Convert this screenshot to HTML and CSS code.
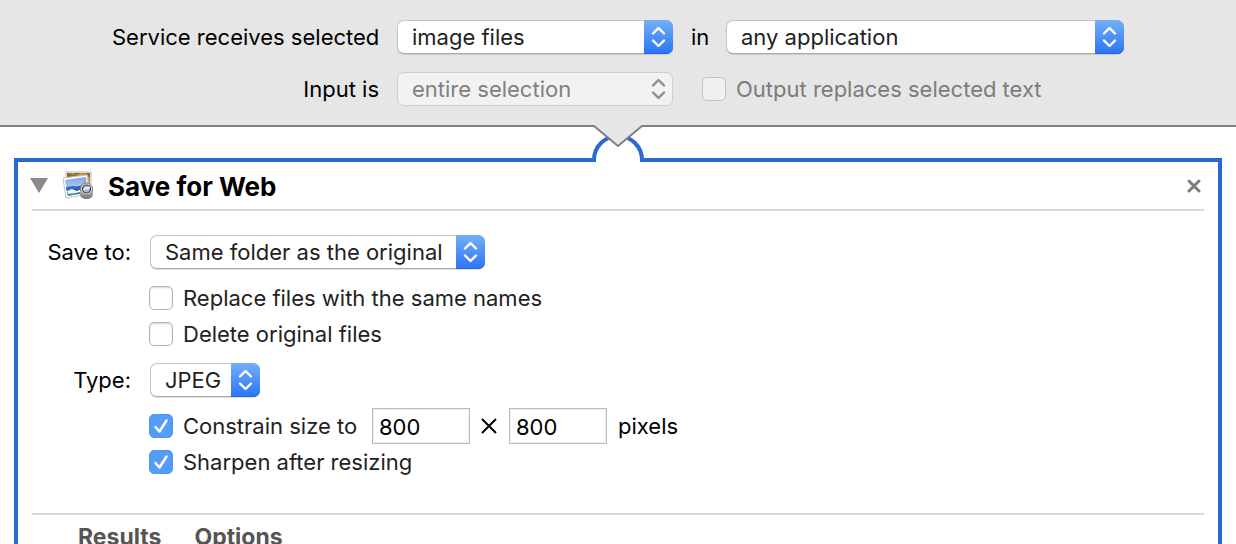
FILE: index.html
```html
<!DOCTYPE html>
<html lang="en">
<head>
<meta charset="utf-8">
<title>Save for Web</title>
<link rel="stylesheet" href="styles.css">
</head>
<body>
<svg class="defs" width="0" height="0" aria-hidden="true">
  <symbol id="chevrons" viewBox="0 0 29 34">
    <path d="M9 13.500 14.500 8 20 13.500M9 20.500 14.500 26 20 20.500" fill="none" stroke="currentColor" stroke-width="2.400" stroke-linecap="round" stroke-linejoin="round"/>
  </symbol>
</svg>
<header class="service">
  <label class="service-label" for="receives">Service receives selected</label>
  <span class="popup">
    <select id="receives"><option>image files</option></select>
    <svg class="popup-arrows"><use href="#chevrons"/></svg>
  </span>
  <label class="service-in" for="app">in</label>
  <span class="popup">
    <select id="app"><option>any application</option></select>
    <svg class="popup-arrows"><use href="#chevrons"/></svg>
  </span>
  <label class="service-label" for="input">Input is</label>
  <span class="popup popup-off">
    <select id="input" disabled><option>entire selection</option></select>
    <svg class="popup-arrows"><use href="#chevrons"/></svg>
  </span>
  <label class="check service-output"><input type="checkbox" disabled>Output replaces selected text</label>
  <svg class="notch" viewBox="0 0 60 40" aria-hidden="true">
    <rect x="8" y="33" width="44" height="7" fill="#fff"/>
    <path d="M6 37V35A24 24 0 0 1 54 35V37" fill="#fff" stroke="#2869d2" stroke-width="4"/>
    <path d="M5 0H55L54 1 30 21 6 1Z" fill="#e6e6e6"/>
    <path d="M5 1H6L30 21 54 1H55" fill="none" stroke="#808080" stroke-width="2"/>
  </svg>
</header>
<main class="workflow">
  <section class="action">
    <div class="action-head">
      <button class="disclose" aria-label="Collapse"><svg width="18" height="15" viewBox="0 0 18 15"><path d="M0 0H18L9 15Z" fill="#8b8b8b"/></svg></button>
      <svg class="app-icon" width="34" height="32" viewBox="0 0 34 32" aria-hidden="true">
        <defs>
          <linearGradient id="sky" x1="0" y1="0" x2="0" y2="1"><stop offset="0" stop-color="#7ba4e8"/><stop offset="1" stop-color="#d4e6fb"/></linearGradient>
          <linearGradient id="metal" x1="0" y1="0" x2="0" y2="1"><stop offset="0" stop-color="#d0cdc6"/><stop offset="1" stop-color="#6f6c65"/></linearGradient>
        </defs>
        <path d="M4 2H29V24H4Z" fill="#fff" stroke="#b7b7b7" stroke-width="1"/>
        <path d="M5 3H28V22H5Z" fill="#8a6534"/>
        <path d="M7 4 11 3 14 5 19 3 25 4 28 8 28 17 25 10 17 6Z" fill="#c1974e"/>
        <path d="M1 8 25 5 28 24 4 28Z" fill="#fff" stroke="#c4c4c4" stroke-width="1"/>
        <path d="M3 10 24 7 26 22 6 26Z" fill="url(#sky)"/>
        <path d="M4 18 25 15 26 22 6 26Z" fill="#214e9b"/>
        <path d="M4 17 11 16 16 17 25 15 25 18 17 19 5 20Z" fill="#356db4"/>
        <path d="M5 21 10 19 15 21 19 19 19 22 14 23 6 24Z" fill="#edf7ff"/>
        <path d="M6 25 12 23 17 24 6 26Z" fill="#6aa3aa"/>
        <path d="M18 20H31V25A6.500 4 0 0 1 18 25Z" fill="url(#metal)"/>
        <circle cx="24.500" cy="19" r="6" fill="#f1eee8" stroke="#77736b"/>
        <circle cx="24.500" cy="19" r="4" fill="#a9bdd3" stroke="#34383e" stroke-width="1.200"/>
        <path d="M21.500 20 24 18 26 18.500 27.500 17" fill="none" stroke="#fff" stroke-width="1.500"/>
      </svg>
      <h1>Save for Web</h1>
      <button class="close" aria-label="Remove action"><svg width="14" height="14" viewBox="0 0 14 14"><path d="M2 2 12 12M12 2 2 12" fill="none" stroke="#7d7d7d" stroke-width="3" stroke-linecap="round"/></svg></button>
    </div>
    <form class="options">
      <label class="option-label" for="folder">Save to:</label>
      <span class="popup popup-folder">
        <select id="folder"><option>Same folder as the original</option></select>
        <svg class="popup-arrows"><use href="#chevrons"/></svg>
      </span>
      <div class="checks">
        <label class="check"><input type="checkbox">Replace files with the same names</label>
        <label class="check"><input type="checkbox">Delete original files</label>
      </div>
      <label class="option-label" for="type">Type:</label>
      <span class="popup popup-type">
        <select id="type"><option>JPEG</option></select>
        <svg class="popup-arrows"><use href="#chevrons"/></svg>
      </span>
      <div class="checks">
        <div class="size">
          <label class="check size-check"><input type="checkbox" checked>Constrain size to</label>
          <input class="size-field" type="text" value="800" aria-label="Width">
          <svg class="times" width="18" height="18" viewBox="0 0 18 18" role="img" aria-label="by"><path d="M2 2 16 16M16 2 2 16" stroke="#000" stroke-width="2"/></svg>
          <input class="size-field" type="text" value="800" aria-label="Height">
          <span class="unit">pixels</span>
        </div>
        <label class="check"><input type="checkbox" checked>Sharpen after resizing</label>
      </div>
    </form>
    <footer class="tabs">
      <button>Results</button>
      <button>Options</button>
    </footer>
  </section>
</main>
</body>
</html>
```
FILE: styles.css
```css
* { box-sizing: border-box; }

body {
  margin: 0;
  height: 100vh;
  overflow: hidden;
  background: #fff;
  color: #000;
  font: 22px/28px Inter, "Liberation Sans", sans-serif;
}

button, input, select { font: inherit; color: inherit; margin: 0; }
button { padding: 0; border: 0; background: none; }
svg { display: block; flex: none; }
.defs { position: absolute; }

.service {
  position: relative;
  display: grid;
  grid-template-columns: 267px 276px 17px 398px;
  gap: 18px;
  align-items: center;
  justify-content: center;
  padding: 20px 0 19px;
  background: #e6e6e6;
  border-bottom: 2px solid #808080;
}
.service-label { text-align: right; white-space: nowrap; }
.service-output { grid-column: 3 / -1; padding-left: 11px; }

.notch {
  position: absolute;
  left: 50%;
  top: 100%;
  width: 60px;
  height: 40px;
  margin-left: -30px;
}

.popup { position: relative; display: block; height: 34px; }
.popup select {
  appearance: none;
  display: block;
  width: 100%;
  height: 34px;
  padding: 0 30px 0 14px;
  border: 1px solid #c6c6c6;
  border-bottom-color: #aaa;
  border-radius: 7px;
  background: #fff;
  color: #222;
  box-shadow: 0 1px 1px rgba(0, 0, 0, .12);
  line-height: 28px;
}
.popup-arrows {
  position: absolute;
  top: 0;
  right: 0;
  width: 29px;
  height: 34px;
  border-radius: 0 7px 7px 0;
  background: linear-gradient(#74aff6, #2a74f7);
  box-shadow: inset 0 -1px #1c62ee;
  color: #fff;
  pointer-events: none;
}
.popup-off select { background: #f2f2f2; color: #808080; opacity: 1; border-color: #cfcfcf; box-shadow: none; }
.popup-off .popup-arrows { background: none; box-shadow: none; color: #8c8c8c; }
.popup-folder { width: 335px; }
.popup-type { width: 110px; }

.check { display: flex; align-items: center; gap: 10px; height: 36px; color: #222; white-space: nowrap; }
.service-output { height: 34px; color: #7c7c7c; }
.check input {
  appearance: none;
  flex: none;
  width: 24px;
  height: 24px;
  border: 1px solid #b4b4b4;
  border-radius: 5px;
  background: #fff;
  box-shadow: inset 0 1px 2px rgba(0, 0, 0, .16);
}
.check input:disabled { background: #f0f0f0; border-color: #c4c4c4; box-shadow: none; }
.check input:checked {
  border-color: #5096f5;
  box-shadow: none;
  background: #559bf8 url("data:image/svg+xml,%3Csvg xmlns='http://www.w3.org/2000/svg' viewBox='0 0 22 22'%3E%3Cpath d='M5.500 12 9.500 16.500 16.500 5.500' fill='none' stroke='white' stroke-width='2.500' stroke-linecap='round' stroke-linejoin='round'/%3E%3C/svg%3E") center / 22px no-repeat;
}

.workflow { padding: 31px 14px 0; }
.action { border: 4px solid #2869d2; padding: 0 14px 20px; }
.action-head {
  display: flex;
  align-items: center;
  height: 49px;
  border-bottom: 2px solid #d8d8d8;
}
.disclose { margin: 0 14px 0 -2px; }
.app-icon { margin-right: 12px; }
h1 { flex: 1; margin: 0; padding-top: 2px; font-size: 26px; line-height: 32px; font-weight: 700; }
.close { padding: 0 3px; }

.options {
  display: grid;
  grid-template-columns: 99px 1fr;
  column-gap: 19px;
  align-items: center;
  padding: 24px 0 22px;
}
.option-label { text-align: right; }
.checks { grid-column: 2; margin-left: -1px; padding: 11px 0; }
.size { display: flex; align-items: center; height: 36px; }
.size-check { width: 223px; }
.size-field { width: 98px; height: 36px; padding: 2px 6px 0; border: 1px solid #bcbcbc; border-radius: 0; background: #fff; box-shadow: inset 0 0 0 1px #f0f0f0; }
.times { margin: 0 11px 0 10px; }
.unit { margin-left: 11px; }

.tabs { display: flex; gap: 33px; padding: 8px 46px; border-top: 2px solid #d8d8d8; }
.tabs button { font-size: 23px; font-weight: 700; color: #555; }
```
